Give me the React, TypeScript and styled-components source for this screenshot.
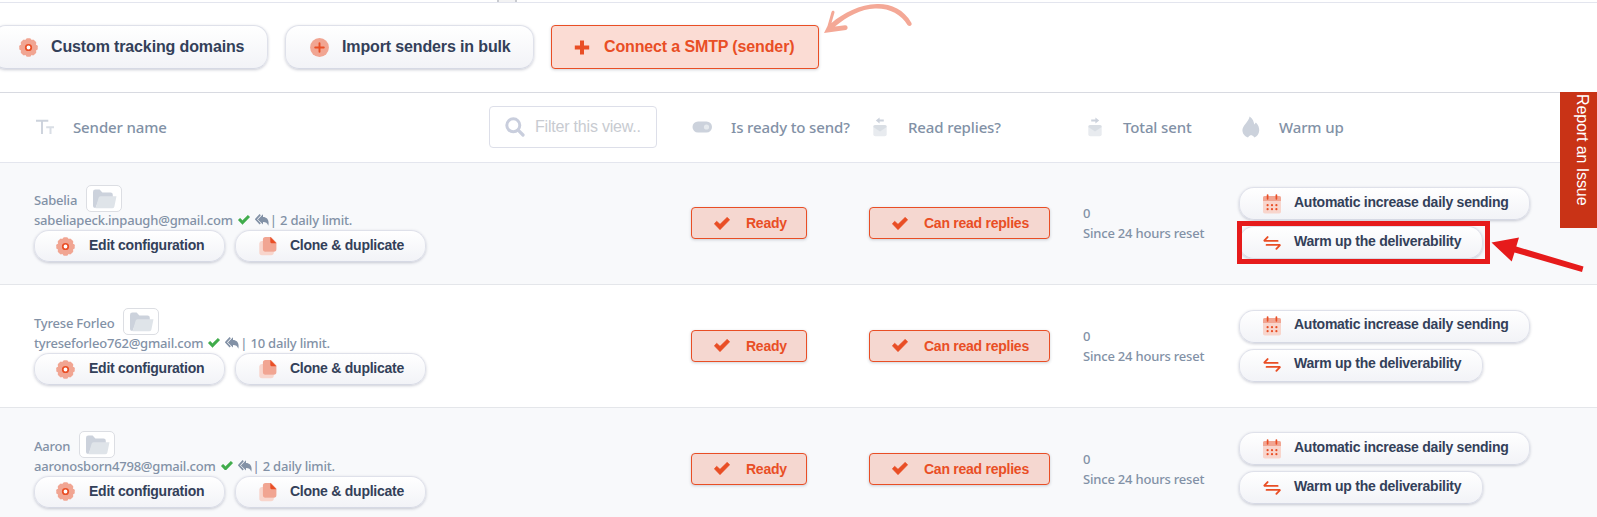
import React from "react";
import styled, { createGlobalStyle, css } from "styled-components";

const Global = createGlobalStyle`
  * { box-sizing: border-box; }
  html, body { margin: 0; height: 517px; overflow: hidden; background: #fff; }
`;

const sans = `"Liberation Sans", Arial, sans-serif`;
const humanist = `"Noto Sans", "Open Sans", sans-serif`;
const accent = "#e94e25";

const Page = styled.div`
  position: relative;
  width: 1597px;
  height: 517px;
  overflow: hidden;
  background: #fff;
  font-family: ${humanist};
  color: #8291a6;
`;

const TopEdge = styled.div`
  height: 3px;
  border-bottom: 1px solid #e3e5ee;
  padding-left: 497px;
  overflow: hidden;
`;

const EdgeKnob = styled.div`
  width: 20px;
  height: 2px;
  background: #f3f3f4;
  border: solid #c9cbd0;
  border-width: 0 2px;
`;

const Toolbar = styled.div`
  display: flex;
  align-items: flex-start;
  height: 89px;
  padding-top: 22px;
  margin-left: -8px;
  gap: 17px;
`;

type BtnProps = { $w: number; $h: number; $pad: number; $gap: number; $large?: boolean; $lift?: number };

const buttonBase = css<BtnProps>`
  display: flex;
  align-items: center;
  flex: none;
  width: ${(p) => p.$w}px;
  height: ${(p) => p.$h}px;
  padding: 0 0 0 ${(p) => p.$pad}px;
  gap: ${(p) => p.$gap}px;
  font: bold ${(p) => (p.$large ? 16 : 14)}px/20px ${sans};
  letter-spacing: ${(p) => (p.$large ? -0.135 : -0.25)}px;
  white-space: nowrap;
  svg { flex: none; display: block; }
  span { padding-bottom: ${(p) => 2 * (p.$lift ?? 0)}px; }
`;

const PillButton = styled.button<BtnProps>`
  ${buttonBase}
  color: #334059;
  border: 1px solid #dfe1ea;
  border-bottom-color: #d6d9e4;
  border-radius: ${(p) => (p.$large ? 14 : 15)}px;
  background: linear-gradient(#fff, #f2f3f7);
  box-shadow: 0 1px 3px rgba(60, 66, 100, 0.27);
`;

const AccentButton = styled.button<BtnProps>`
  ${buttonBase}
  color: ${accent};
  border: 1px solid ${accent};
  border-radius: 4px;
  background: ${(p) => (p.$large ? "#fbdcd4" : "#f5d7d0")};
  box-shadow: 0 1px 3px rgba(60, 66, 90, 0.24);
`;

const columns = "657px 178px 214px 156px 1fr";

const HeaderRow = styled.div`
  display: grid;
  grid-template-columns: ${columns};
  height: 71px;
  padding-left: 34px;
  border-top: 1px solid #d8dae1;
  border-bottom: 1px solid #e4e6ee;
`;

const HeadCell = styled.div<{ $icon: number; $ml?: number }>`
  display: grid;
  grid-template-columns: ${(p) => p.$icon}px auto 1fr;
  align-items: center;
  margin-left: ${(p) => p.$ml ?? 0}px;
  height: 67px;
  svg { display: block; }
`;

const HeadLabel = styled.span`
  font-size: 15px;
  font-weight: 550;
  line-height: 22px;
  letter-spacing: -0.13px;
  white-space: nowrap;
`;

const Filter = styled.label`
  justify-self: end;
  display: flex;
  align-items: center;
  gap: 10px;
  width: 168px;
  height: 42px;
  margin-right: 34px;
  padding-left: 15px;
  border: 1px solid #dddfe9;
  border-radius: 4px;
`;

const FilterInput = styled.input`
  width: 106px;
  padding: 0;
  border: 0;
  outline: 0;
  background: none;
  font: 16px ${sans};
  letter-spacing: -0.2px;
  color: #555;
  &::placeholder { color: #c8cbd1; opacity: 1; }
`;

const Row = styled.div<{ $shade: boolean; $h: number }>`
  display: grid;
  grid-template-columns: ${columns};
  height: ${(p) => p.$h}px;
  padding-left: 34px;
  border-bottom: 1px solid #e4e6ea;
  background: ${(p) => (p.$shade ? "#f8f9fb" : "#fff")};
`;

const Cell = styled.div<{ $top: number }>`
  padding-top: ${(p) => p.$top}px;
  font-size: 13px;
  font-weight: 550;
  line-height: 20px;
  letter-spacing: -0.2px;
`;

const NameLine = styled.div`
  display: flex;
  height: 27px;
  gap: 9px;
`;

const NameText = styled.span`
  padding-top: 5px;
`;

const FolderBox = styled.span`
  display: flex;
  justify-content: center;
  padding-top: 3px;
  width: 36px;
  height: 27px;
  border: 1px solid #dcdee3;
  border-radius: 5px;
  background: #fff;
`;

const MailLine = styled.div`
  display: flex;
  align-items: center;
  height: 18px;
  padding-bottom: 2px;
  gap: 5px;
  white-space: nowrap;
  svg { flex: none; }
`;

const Limit = styled.span`
  margin-left: -4px;
`;

const Actions = styled.div`
  display: flex;
  gap: 10px;
`;

const Stack = styled.div`
  display: flex;
  flex-direction: column;
  gap: 6px;
`;

const IssueTab = styled.div`
  position: absolute;
  left: 1560px;
  top: 92px;
  width: 37px;
  height: 136px;
  padding: 2px 0 0 0;
  background: #c93316;
  color: #fff;
  font: 16px/30px ${sans};
  letter-spacing: -0.1px;
  writing-mode: vertical-rl;
`;

const Highlight = styled.div`
  position: absolute;
  left: 1237px;
  top: 221px;
  width: 253px;
  height: 43px;
  border: 5px solid #e61b1b;
`;

const Overlay = styled.svg`
  position: absolute;
  left: 0;
  top: 0;
  pointer-events: none;
`;

const Gear = () => (
  <svg width="19" height="19" viewBox="0 0 20 20">
    <g fill="#f1a592">
      <circle cx="10" cy="10" r="8.6" />
      {[0, 45, 90, 135, 180, 225, 270, 315].map((a) => (
        <rect key={a} x="7" y="0.3" width="6" height="6" rx="1.8" transform={`rotate(${a} 10 10)`} />
      ))}
    </g>
    <circle cx="10" cy="10" r="2.9" fill="#fff" stroke={accent} strokeWidth="1.8" />
  </svg>
);

const PlusCircle = () => (
  <svg width="19" height="19" viewBox="0 0 19 19">
    <circle cx="9.5" cy="9.5" r="9.4" fill="#f1a592" />
    <path d="M9.5 5.2v8.600M5.200 9.500h8.600" stroke={accent} strokeWidth="1.9" strokeLinecap="round" />
  </svg>
);

const Plus = () => (
  <svg width="16" height="15" viewBox="0 0 16 15">
    <path d="M8 0.5v14M0.8 7.500h14.400" stroke={accent} strokeWidth="4" />
  </svg>
);

const Tick = ({ color = accent, size = 16 }: { color?: string; size?: number }) => (
  <svg width={size} height={(size * 13) / 16} viewBox="0 0 16 13">
    <path d="M0.3 6.8 2.7 4.2 6 7.3 13.2 0.3 15.7 2.8 6 12.7Z" fill={color} stroke={color} strokeWidth="0.6" strokeLinejoin="round" />
  </svg>
);

const Pages = () => (
  <svg width="19" height="20" viewBox="0 0 19 20">
    <path d="M2.8 5h4v10.5h8v1a2.8 2.8 0 0 1-2.8 2.8H3A2.8 2.8 0 0 1 .3 16.5V7.5A2.6 2.6 0 0 1 2.8 5Z" fill="#f8d5cc" />
    <path d="M6.5 1h5.5l5.4 5.6v6.5a2.6 2.6 0 0 1-2.6 2.6H6.5a2.6 2.6 0 0 1-2.6-2.6V3.6A2.6 2.6 0 0 1 6.5 1Z" fill="#f1a592" />
    <path d="M11.3 1 17.4 7.2h-5a1.1 1.1 0 0 1-1.1-1.1Z" fill={accent} />
  </svg>
);

const Folder = () => (
  <svg width="25" height="20" viewBox="0 0 25 20">
    <path d="M1 3a2.4 2.4 0 0 1 2.4-2.4h4.2L10.4 3.6h8.2A2.2 2.2 0 0 1 20.8 5.8V8H8L3.5 19A2.5 2.5 0 0 1 1 16.5Z" fill="#ccd2dc" />
    <path d="M8.5 7.3H24.5L22.4 17.5A2 2 0 0 1 20.5 19.2H3.6L6.6 8.8A2 2 0 0 1 8.5 7.3Z" fill="#dfe4e9" />
  </svg>
);

const ReplyAll = () => (
  <svg width="14" height="12" viewBox="0 0 14 12">
    <path d="M8 0.3V3C12 3.1 14.5 6 13.3 11.7 12.3 8.9 10.9 8 8 8V10.6L2.9 5.4Z" fill="#8291a6" />
    <path d="M5.2 0.7 0.9 5.3 5.2 9.9" fill="none" stroke="#8291a6" strokeWidth="1.7" />
  </svg>
);

const Calendar = () => (
  <svg width="18" height="20" viewBox="0 0 18 20">
    <rect x="0" y="2" width="18" height="17.5" rx="1.8" fill="#f8d5cc" />
    <path d="M0 7V3.8A1.8 1.8 0 0 1 1.8 2H16.2A1.8 1.8 0 0 1 18 3.8V7Z" fill="#f1a592" />
    <path d="M4.6 1v3.8M13.4 1v3.8" stroke={accent} strokeWidth="1.7" strokeLinecap="round" />
    <g fill={accent}>
      {[4.6, 9, 13.4].map((x) => [11.2, 15.2].map((y) => <circle key={`${x}-${y}`} cx={x} cy={y} r="1.1" />))}
    </g>
  </svg>
);

const Swap = () => (
  <svg width="18" height="14" viewBox="0 0 18 14">
    <path d="M14.6 4.9H1L4.6 1.1M3.6 8.9H17.2L13.4 12.8" fill="none" stroke={accent} strokeWidth="1.9" strokeLinecap="round" strokeLinejoin="bevel" />
  </svg>
);

const TextIcon = () => (
  <svg width="22" height="16" viewBox="0 0 22 16">
    <path d="M2 1.7h12.3M8 1.7V15" stroke="#ccd2dc" strokeWidth="1.9" fill="none" />
    <path d="M12.2 8.2H20M16.5 8.2V15" stroke="#d9dee5" strokeWidth="2" fill="none" />
  </svg>
);

const Search = () => (
  <svg width="20" height="20" viewBox="0 0 20 20">
    <circle cx="8.3" cy="8.3" r="6.5" fill="none" stroke="#c9cedd" strokeWidth="3" />
    <path d="M13.2 13.2 18 18" stroke="#c9cedd" strokeWidth="3.2" strokeLinecap="round" />
  </svg>
);

const Toggle = () => (
  <svg width="22" height="12" viewBox="0 0 22 12">
    <rect x="1.5" y="0.5" width="19.5" height="11" rx="5.5" fill="#ccd2dc" />
    <circle cx="15.5" cy="6" r="2.6" fill="#e6eaee" />
  </svg>
);

const MailIcon = ({ flip }: { flip?: boolean }) => (
  <svg width="14" height="20" viewBox="0 0 14 20">
    <path d="M2.8 3.5 6.6 0.4V2.5H10.8V4.5H6.6V6.6Z" transform={flip ? "translate(14 0) scale(-1 1)" : undefined} fill="#ccd2dc" />
    <rect x="0.3" y="8" width="13.4" height="11.2" rx="2" fill="#e8ebef" />
    <path d="M0.3 10A2 2 0 0 1 2.3 8H11.7A2 2 0 0 1 13.7 10L7 14.5Z" fill="#d9dee4" />
  </svg>
);

const Flame = () => (
  <svg width="18" height="22" viewBox="0 0 18 22">
    <path d="M7.6 0.4C10.8 2.6 12 5.5 12.2 8.5L13.9 6.4C16.5 9 17.4 12 17.2 14.5 17 18 15 20.5 12.3 21.4 12 20.4 10.5 19.600 9 19 7.800 19.600 6.600 20.400 6 21.400 3 20.500 0.500 18 0.400 14.300 0.300 9.500 6.700 6 7.600 0.400Z" fill="#ccd2dc" />
  </svg>
);

type Sender = { name: string; mail: string; limit: string; height: number; tops: [number, number, number, number] };

const senders: Sender[] = [
  { name: "Sabelia", mail: "sabeliapeck.inpaugh@gmail.com", limit: "| 2 daily limit.", height: 122, tops: [22, 44, 40, 24] },
  { name: "Tyrese Forleo", mail: "tyreseforleo762@gmail.com", limit: "| 10 daily limit.", height: 123, tops: [23, 44.6, 41, 24.6] },
  { name: "Aaron", mail: "aaronosborn4798@gmail.com", limit: "| 2 daily limit.", height: 123, tops: [22.6, 44.6, 41, 24] },
];

const SenderRow = ({ s, shade }: { s: Sender; shade: boolean }) => (
  <Row $shade={shade} $h={s.height}>
    <Cell $top={s.tops[0]}>
      <NameLine>
        <NameText>{s.name}</NameText>
        <FolderBox><Folder /></FolderBox>
      </NameLine>
      <MailLine>
        <span>{s.mail}</span>
        <Tick color="#41ad4c" size={12} />
        <ReplyAll />
        <Limit>{s.limit}</Limit>
      </MailLine>
      <Actions>
        <PillButton $w={191} $h={32} $pad={21} $gap={14} $lift={1}><Gear /><span>Edit configuration</span></PillButton>
        <PillButton $w={191} $h={32} $pad={23} $gap={12} $lift={1}><Pages /><span>Clone &amp; duplicate</span></PillButton>
      </Actions>
    </Cell>
    <Cell $top={s.tops[1]}>
      <AccentButton $w={116} $h={32} $pad={22} $gap={16}><Tick /><span>Ready</span></AccentButton>
    </Cell>
    <Cell $top={s.tops[1]}>
      <AccentButton $w={181} $h={32} $pad={22} $gap={16}><Tick /><span>Can read replies</span></AccentButton>
    </Cell>
    <Cell $top={s.tops[2]}>
      <div>0</div>
      <div>Since 24 hours reset</div>
    </Cell>
    <Cell $top={s.tops[3]}>
      <Stack>
        <PillButton $w={291} $h={33} $pad={23} $gap={13} $lift={2}><Calendar /><span>Automatic increase daily sending</span></PillButton>
        <PillButton $w={244} $h={33} $pad={23} $gap={13} $lift={2}><Swap /><span>Warm up the deliverability</span></PillButton>
      </Stack>
    </Cell>
  </Row>
);

export default function App() {
  return (
    <Page>
      <Global />
      <TopEdge><EdgeKnob /></TopEdge>
      <Toolbar>
        <PillButton $large $w={276} $h={44} $pad={26} $gap={13}><Gear /><span>Custom tracking domains</span></PillButton>
        <PillButton $large $w={249} $h={44} $pad={24} $gap={13}><PlusCircle /><span>Import senders in bulk</span></PillButton>
        <AccentButton $large $w={268} $h={44} $pad={22} $gap={14}><Plus /><span>Connect a SMTP (sender)</span></AccentButton>
      </Toolbar>
      <HeaderRow>
        <HeadCell $icon={39}><TextIcon /><HeadLabel>Sender name</HeadLabel>
          <Filter><Search /><FilterInput placeholder="Filter this view.." /></Filter>
        </HeadCell>
        <HeadCell $icon={40}><Toggle /><HeadLabel>Is ready to send?</HeadLabel></HeadCell>
        <HeadCell $icon={35} $ml={4}><MailIcon /><HeadLabel>Read replies?</HeadLabel></HeadCell>
        <HeadCell $icon={35} $ml={5}><MailIcon flip /><HeadLabel>Total sent</HeadLabel></HeadCell>
        <HeadCell $icon={37} $ml={3}><Flame /><HeadLabel>Warm up</HeadLabel></HeadCell>
      </HeaderRow>
      {senders.map((s, i) => <SenderRow key={s.mail} s={s} shade={i % 2 === 0} />)}
      <IssueTab>Report an Issue</IssueTab>
      <Highlight />
      <Overlay width="1597" height="517" viewBox="0 0 1597 517">
        <path d="M911.5 23C904 9 890 3.5 877 4 860 4.5 843 13 831.5 23L834.5 12.5C834.8 10.5 832.2 10 831.5 12L827.5 26 824 33 846 30C848.5 29 848 25 845 25.2L835 26.5C847 16.5 861 9 875 8.5 889 8 901 14 907.5 25 909.5 27 912.5 25.500 911.500 23Z" fill="#f4a896" />
        <path d="M1491.500 242.500 1519 237.500 1516.300 246.500 1583.500 266.500 1582 272 1514.500 252.500 1511.700 261.500Z" fill="#e61b1b" />
      </Overlay>
    </Page>
  );
}
